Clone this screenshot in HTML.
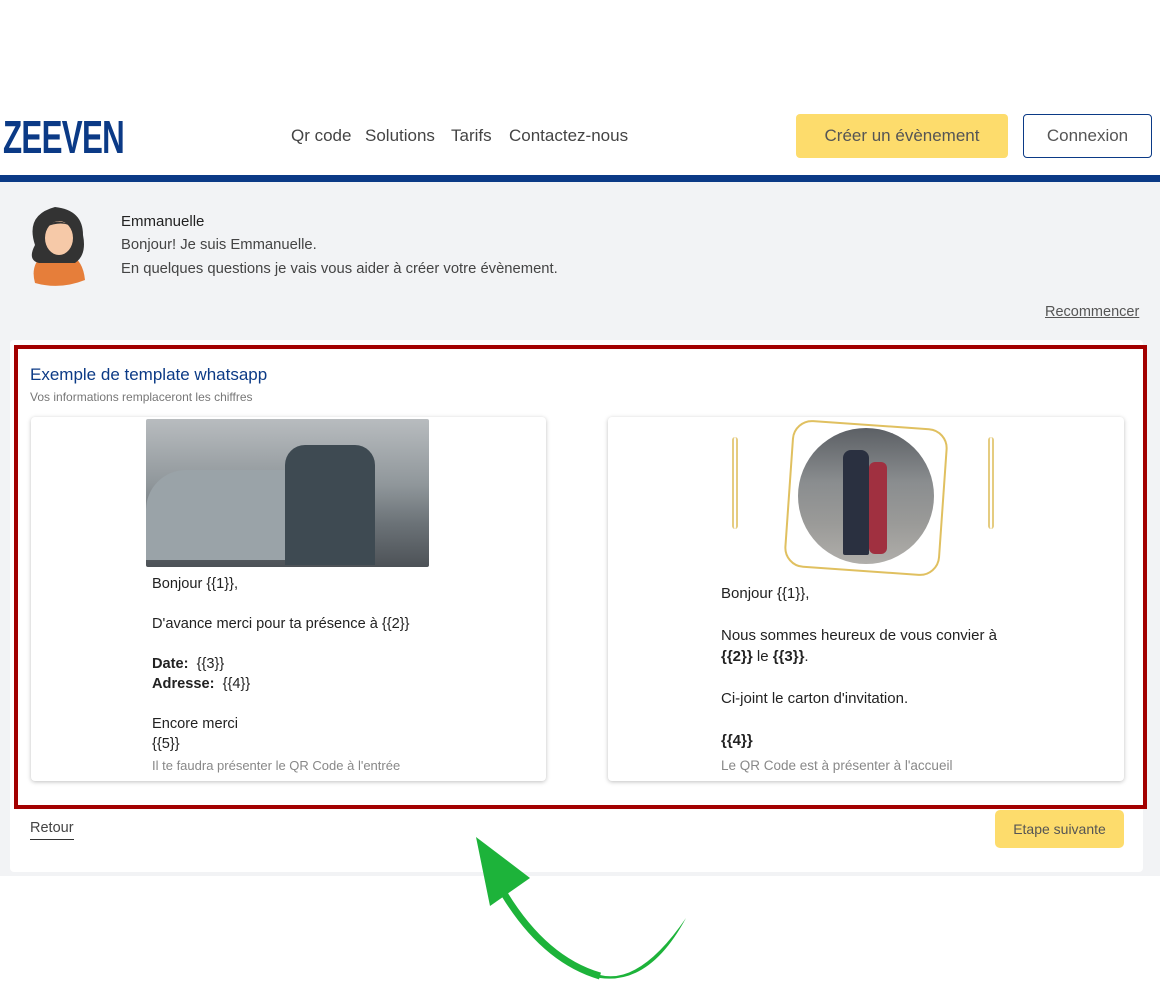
<!DOCTYPE html>
<html><head><meta charset="utf-8"><style>
*{margin:0;padding:0;box-sizing:border-box}
body{width:1160px;height:1000px;background:#fff;font-family:"Liberation Sans",sans-serif;position:relative;overflow:hidden;color:#333}
.abs{position:absolute}
.nav a{position:absolute;top:126px;font-size:17px;color:#444}
.gray{left:0;top:182px;width:1160px;height:694px;background:#f2f3f5}
.card{left:10px;top:340px;width:1133px;height:532px;background:#fff;border-radius:4px}
.red{left:14px;top:345px;width:1133px;height:464px;border:4px solid #a30000}
.tc{background:#fff;border-radius:4px;box-shadow:0 1px 4px rgba(0,0,0,.25)}
.t{font-size:14.6px;color:#222;line-height:20px}
</style></head><body>
<div class="abs" style="left:3px;top:110px;font-size:46px;font-weight:bold;color:#0b3a86;letter-spacing:-1px;transform:scaleX(.68);transform-origin:left">ZEEVEN</div>
<div class="nav"><a style="left:291px">Qr code</a><a style="left:365px">Solutions</a><a style="left:451px">Tarifs</a><a style="left:509px">Contactez-nous</a></div>
<div class="abs" style="left:796px;top:114px;width:212px;height:44px;background:#fddc6c;border-radius:4px;text-align:center;line-height:44px;font-size:17px;color:#555">Créer un évènement</div>
<div class="abs" style="left:1023px;top:114px;width:129px;height:44px;border:1.5px solid #0b3a86;border-radius:4px;text-align:center;line-height:41px;font-size:17px;color:#555">Connexion</div>
<div class="abs" style="left:0;top:175px;width:1160px;height:7px;background:#0b3a86"></div>
<div class="abs gray"></div>
<svg class="abs" style="left:25px;top:205px" width="65" height="82" viewBox="0 0 65 82"><path d="M18 50 Q5 60 10 78 Q35 85 60 75 Q58 55 45 50Z" fill="#e67e3a"/><path d="M10 40 Q0 10 30 2 Q58 5 58 30 Q62 50 50 58 L14 58 Q2 55 10 40Z" fill="#333"/><ellipse cx="34" cy="33" rx="14" ry="17" fill="#f6c9a8"/><path d="M20 22 Q34 10 50 24 Q40 14 20 22Z" fill="#333"/></svg>
<div class="abs" style="left:121px;top:213px;font-size:15px;color:#222">Emmanuelle</div>
<div class="abs" style="left:121px;top:233px;font-size:14.8px;color:#444;line-height:24px">Bonjour! Je suis Emmanuelle.<br>En quelques questions je vais vous aider à créer votre évènement.</div>
<div class="abs" style="left:1045px;top:304px;font-size:14.5px;color:#555;text-decoration:underline">Recommencer</div>
<div class="abs card"></div>
<div class="abs" style="left:30px;top:365px;font-size:17px;color:#0b3a86">Exemple de template whatsapp</div>
<div class="abs" style="left:30px;top:390px;font-size:12px;color:#777">Vos informations remplaceront les chiffres</div>
<div class="abs tc" style="left:31px;top:417px;width:515px;height:364px"></div>
<div class="abs" style="left:146px;top:419px;width:283px;height:148px;background:linear-gradient(180deg,#b8bcbf 0%,#8f969a 45%,#6c7378 70%,#4d5257 100%);border-radius:2px"></div>
<div class="abs" style="left:146px;top:470px;width:150px;height:90px;background:#9aa3a8;border-radius:40px 10px 0 0"></div>
<div class="abs" style="left:285px;top:445px;width:90px;height:120px;background:#3e4a52;border-radius:20px 20px 0 0"></div>
<div class="abs t" style="left:152px;top:574px">Bonjour {{1}},<br><br>D'avance merci pour ta présence à {{2}}<br><br><b>Date:</b>&nbsp; {{3}}<br><b>Adresse:</b>&nbsp; {{4}}<br><br>Encore merci<br>{{5}}</div>
<div class="abs" style="left:152px;top:758px;font-size:13px;color:#888">Il te faudra présenter le QR Code à l'entrée</div>
<div class="abs tc" style="left:608px;top:417px;width:516px;height:364px"></div>
<div class="abs" style="left:788px;top:424px;width:156px;height:148px;border:2px solid #e0c060;transform:rotate(4deg);border-radius:20px"></div>
<div class="abs" style="left:798px;top:428px;width:136px;height:136px;border-radius:50%;background:linear-gradient(180deg,#5c6065 0%,#8a8d8f 40%,#9a9a98 70%,#b0aeaa 100%)"></div>
<div class="abs" style="left:843px;top:450px;width:26px;height:105px;background:#2a3040;border-radius:8px 8px 2px 2px"></div>
<div class="abs" style="left:869px;top:462px;width:18px;height:92px;background:#a03040;border-radius:6px"></div>
<div class="abs" style="left:732px;top:437px;width:6px;height:92px;border-left:2px solid #e5cc80;border-right:2px solid #e5cc80;border-radius:4px"></div>
<div class="abs" style="left:988px;top:437px;width:6px;height:92px;border-left:2px solid #e5cc80;border-right:2px solid #e5cc80;border-radius:4px"></div>
<div class="abs t" style="left:721px;top:583px;line-height:21px;font-size:15px">Bonjour {{1}},<br><br>Nous sommes heureux de vous convier à<br><b>{{2}}</b> le <b>{{3}}</b>.<br><br>Ci-joint le carton d'invitation.<br><br><b>{{4}}</b></div>
<div class="abs" style="left:721px;top:758px;font-size:13.5px;color:#888">Le QR Code est à présenter à l'accueil</div>
<div class="abs red"></div>
<div class="abs" style="left:30px;top:820px;font-size:14.5px;color:#444;border-bottom:1.5px solid #333;padding-bottom:3px">Retour</div>
<div class="abs" style="left:995px;top:810px;width:129px;height:38px;background:#fddc6c;border-radius:5px;text-align:center;line-height:38px;font-size:14px;color:#555">Etape suivante</div>
<svg class="abs" style="left:0;top:0" width="1160" height="1000"><path d="M686 918 Q640 985 600 975 Q540 960 505 890 L495 880 Q545 960 600 978 Q650 985 686 918Z" fill="#1db33a"/><path d="M600 976 Q545 960 505 895" stroke="#1db33a" stroke-width="7" fill="none"/><path d="M476 837 L530 878 L490 906Z" fill="#1db33a"/></svg>
</body></html>
